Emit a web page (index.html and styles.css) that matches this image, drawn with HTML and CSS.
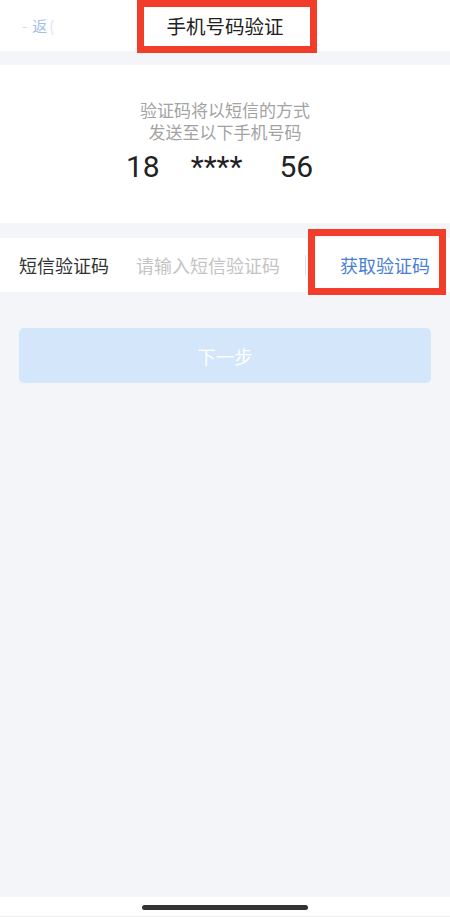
FILE: index.html
```html
<!DOCTYPE html>
<html lang="zh-CN">
<head>
<meta charset="utf-8">
<meta name="viewport" content="width=450">
<title>手机号码验证</title>
<link rel="stylesheet" href="styles.css">
</head>
<body>
<div class="page">
  <header class="header">
    <div class="back"><span class="back-dash">-</span>返<span class="back-frag">(</span></div>
    <h1 class="title">手机号码验证</h1>
    <div class="header-side"></div>
    <div class="mark mark-title"></div>
  </header>

  <section class="card">
    <p class="desc">验证码将以短信的方式</p>
    <p class="desc">发送至以下手机号码</p>
    <p class="phone"><span class="ph-a">18</span><span class="ph-b">****</span><span class="ph-c">56</span></p>
  </section>

  <section class="row">
    <span class="label">短信验证码</span>
    <span class="placeholder">请输入短信验证码</span>
    <span class="divider"></span>
    <span class="link">获取验证码</span>
    <div class="mark mark-link"></div>
  </section>

  <div class="btn">下一步</div>

  <div class="spacer"></div>

  <footer class="home">
    <div class="home-bar"></div>
  </footer>
</div>
</body>
</html>
```

FILE: styles.css
```css
* { box-sizing: border-box; }
html, body { margin: 0; padding: 0; }
body {
  background: #f4f5f9;
  font-family: "Noto Sans CJK SC", "Noto Sans", sans-serif;
  width: 450px;
}
.page {
  position: relative;
  display: flex;
  flex-direction: column;
  min-height: 917px;
}
.header {
  position: relative;
  height: 51px;
  background: #fff;
  display: grid;
  grid-template-columns: 1fr auto 1fr;
  align-items: center;
}
.back {
  padding-left: 22px;
  font-size: 15px;
  color: #7da3da;
  opacity: 0.7;
  letter-spacing: 2px;
}
.back-dash { color: #b9cdea; margin-right: 3px; }
.back-frag { color: #c9d8ee; }
.title {
  margin: 0;
  font-size: 19.5px;
  font-weight: 400;
  color: #222;
  line-height: 51px;
}
.mark {
  position: absolute;
  border: 7px solid #f33d2b;
  pointer-events: none;
}
.mark-title {
  left: 137px;
  top: 0;
  width: 180px;
  height: 53px;
}
.card {
  margin-top: 14px;
  height: 158px;
  background: #fff;
  padding-top: 36px;
  text-align: center;
}
.desc {
  margin: 0;
  font-family: "Liberation Sans", "Noto Sans CJK SC", sans-serif;
  font-size: 17px;
  line-height: 22px;
  color: #a3a3a3;
}
.phone {
  margin: 4px 0 0;
  font-family: Roboto, "Noto Sans", sans-serif;
  font-size: 30px;
  line-height: 36px;
  color: #222;
  display: flex;
  justify-content: flex-start;
  padding-left: 126px;
}
.ph-b { margin-left: 31px; }
.ph-c { margin-left: 37px; }
.row {
  position: relative;
  margin-top: 15px;
  height: 54px;
  background: #fff;
  display: flex;
  align-items: center;
  padding: 0 20px 0 19px;
}
.label {
  width: 117px;
  font-size: 18px;
  color: #333;
}
.placeholder {
  font-size: 18px;
  color: #c4c4c4;
}
.divider {
  width: 1px;
  height: 20px;
  background: #e2e2e2;
  margin-left: 25px;
}
.link {
  margin-left: auto;
  font-size: 18px;
  color: #4a7fd2;
}
.mark-link {
  left: 308px;
  top: -9px;
  width: 138px;
  height: 66px;
}
.btn {
  margin: 36px 19px 0;
  height: 55px;
  border-radius: 5px;
  background: #d4e6fa;
  color: #fff;
  font-size: 18.5px;
  display: flex;
  align-items: center;
  justify-content: center;
}
.spacer { flex: 1; }
.home {
  height: 20px;
  background: #fff;
  border-bottom: 1px solid #eeeeee;
  display: flex;
  justify-content: center;
  padding-top: 8px;
}
.home-bar {
  width: 166px;
  height: 5px;
  border-radius: 3px;
  background: #333;
}
```
